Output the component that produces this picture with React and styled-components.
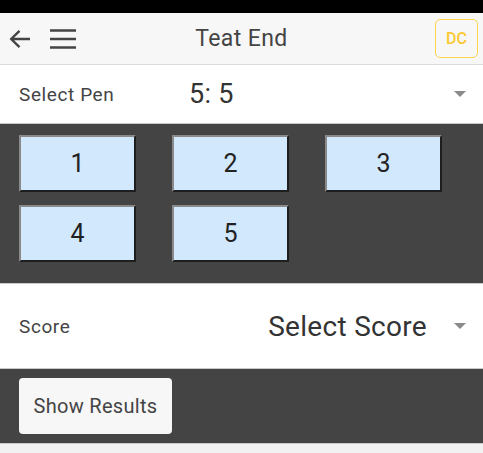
import styled, { createGlobalStyle } from "styled-components";

const GlobalStyle = createGlobalStyle`
  html, body {
    margin: 0;
    padding: 0;
    background: #f2f2f2;
    font-family: Roboto, "Liberation Sans", sans-serif;
  }
`;

const pens = ["1", "2", "3", "4", "5"];

function App() {
  return (
    <Page>
      <GlobalStyle />
      <StatusBar />
      <Header>
        <IconButton aria-label="back">
          <svg width="22" height="20" viewBox="0 0 22 20">
            <path d="M21 10H2.5M10.5 1.8L2.2 10l8.3 8.2" fill="none" stroke="#444" strokeWidth="2.4" />
          </svg>
        </IconButton>
        <IconButton aria-label="menu">
          <svg width="26" height="20" viewBox="0 0 26 20">
            <path d="M0 1.5h26M0 10h26M0 18.5h26" stroke="#444" strokeWidth="2.4" />
          </svg>
        </IconButton>
        <Title>Teat End</Title>
        <Avatar>DC</Avatar>
      </Header>

      <SelectRow height={58}>
        <FieldLabel>Select Pen</FieldLabel>
        <SelectValue size={27} start>5: 5</SelectValue>
        <Caret />
      </SelectRow>

      <DarkPanel>
        <PenGrid>
          {pens.map((p) => (
            <PenButton key={p}>{p}</PenButton>
          ))}
        </PenGrid>
      </DarkPanel>

      <SelectRow height={84}>
        <FieldLabel>Score</FieldLabel>
        <SelectValue size={28}>Select Score</SelectValue>
        <Caret />
      </SelectRow>

      <ActionPanel>
        <ResultsButton>Show Results</ResultsButton>
      </ActionPanel>
    </Page>
  );
}

export default App;

const Page = styled.div`
  width: 483px;
  height: 453px;
  overflow: hidden;
  background: #f2f2f2;
`;

const StatusBar = styled.div`
  height: 13px;
  background: #000;
`;

const Header = styled.header`
  height: 52px;
  box-sizing: border-box;
  display: flex;
  align-items: center;
  padding: 0 5px 0 9px;
  background: #f7f7f7;
  border-bottom: 1px solid #dcdcdc;
`;

const IconButton = styled.div`
  display: flex;
  align-items: center;
  margin-right: 19px;
`;

const Title = styled.div`
  flex: 1;
  text-align: center;
  font-size: 23px;
  letter-spacing: 0.4px;
  color: #444;
  padding-right: 47px;
`;

const Avatar = styled.div`
  width: 43px;
  height: 39px;
  box-sizing: border-box;
  border: 1.5px solid #ffd54f;
  border-radius: 5px;
  display: flex;
  align-items: center;
  justify-content: center;
  color: #fbc934;
  font-size: 16px;
  font-weight: 500;
`;

const SelectRow = styled.div`
  height: ${({ height }) => height}px;
  display: flex;
  align-items: center;
  padding: 0 17px 0 19px;
  background: #fff;
`;

const FieldLabel = styled.div`
  width: 170px;
  font-size: 19px;
  letter-spacing: 0.6px;
  color: #444;
`;

const SelectValue = styled.div`
  flex: 1;
  text-align: ${({ start }) => (start ? "left" : "right")};
  padding-right: ${({ start }) => (start ? 0 : 27)}px;
  font-size: ${({ size }) => size}px;
  letter-spacing: 0.3px;
  color: #333;
`;

const Caret = styled.div`
  width: 0;
  height: 0;
  border-left: 6px solid transparent;
  border-right: 6px solid transparent;
  border-top: 6px solid #8a8a8a;
`;

const DarkPanel = styled.div`
  background: #444;
  border-top: 1px solid #c8c8c8;
  border-bottom: 1px solid #c8c8c8;
  padding: 11px 0 21px 19px;
`;

const PenGrid = styled.div`
  display: grid;
  grid-template-columns: repeat(3, 117px);
  column-gap: 36px;
  row-gap: 13px;
`;

const PenButton = styled.div`
  height: 57px;
  box-sizing: border-box;
  display: flex;
  align-items: center;
  justify-content: center;
  background: #d2e8fd;
  border: 2px solid;
  border-color: #8a8a8a #1e1e1e #1e1e1e #8a8a8a;
  font-size: 25px;
  color: #222;
`;

const ActionPanel = styled.div`
  background: #444;
  border-top: 1px solid #c8c8c8;
  border-bottom: 1px solid #c8c8c8;
  height: 76px;
  box-sizing: border-box;
  padding: 9px 0 0 19px;
`;

const ResultsButton = styled.div`
  width: 153px;
  height: 56px;
  box-sizing: border-box;
  background: #f7f7f7;
  border-radius: 4px;
  display: flex;
  align-items: center;
  justify-content: center;
  font-size: 20px;
  letter-spacing: 0.3px;
  color: #444;
`;
